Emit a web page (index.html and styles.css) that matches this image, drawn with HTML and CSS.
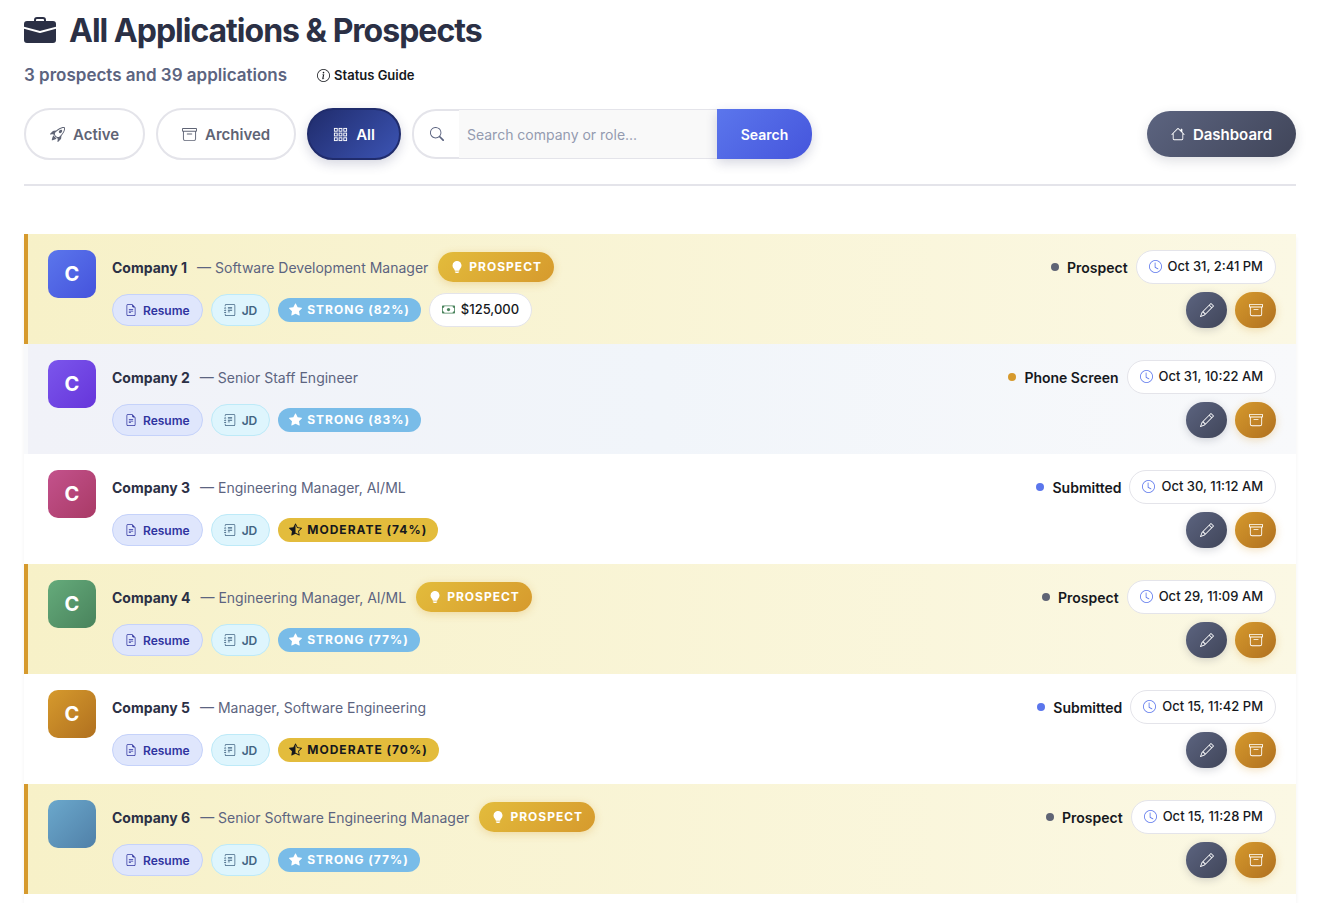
FILE: index.html
```html
<!DOCTYPE html>
<html lang="en">
<head>
  <meta charset="UTF-8">
  <meta name="viewport" content="width=device-width, initial-scale=1.0">
  <title>All Applications &amp; Prospects</title>
  <link rel="stylesheet" href="styles.css">
</head>
<body>
  <!-- Icon sprite -->
  <svg class="sprite" aria-hidden="true">
    <symbol id="briefcase" viewBox="0 0 16 16"><path d="M6.5 1A1.5 1.5 0 0 0 5 2.5V3H1.5A1.5 1.5 0 0 0 0 4.5v1.384l7.614 2.03a1.5 1.5 0 0 0 .772 0L16 5.884V4.5A1.5 1.5 0 0 0 14.5 3H11v-.5A1.5 1.5 0 0 0 9.5 1zm0 1h3a.5.5 0 0 1 .5.5V3H6v-.5a.5.5 0 0 1 .5-.5"/><path d="M0 12.5A1.5 1.5 0 0 0 1.5 14h13a1.5 1.5 0 0 0 1.5-1.5V6.85L8.129 8.947a.5.5 0 0 1-.258 0L0 6.85z"/></symbol>
    <symbol id="info" viewBox="0 0 16 16"><path d="M8 15A7 7 0 1 1 8 1a7 7 0 0 1 0 14m0 1A8 8 0 1 0 8 0a8 8 0 0 0 0 16"/><path d="m8.93 6.588-2.29.287-.082.38.45.083c.294.07.352.176.288.469l-.738 3.468c-.194.897.105 1.319.808 1.319.545 0 1.178-.252 1.465-.598l.088-.416c-.2.176-.492.246-.686.246-.275 0-.375-.193-.304-.533zM9 4.5a1 1 0 1 1-2 0 1 1 0 0 1 2 0"/></symbol>
    <symbol id="rocket" viewBox="0 0 16 16"><path d="M9.752 6.193c.599.6 1.73.437 2.528-.362s.96-1.932.362-2.531c-.599-.6-1.73-.438-2.528.361-.798.8-.96 1.933-.362 2.532"/><path d="M15.811 3.312c-.363 1.534-1.334 3.626-3.64 6.218l-.24 2.408a2.56 2.56 0 0 1-.732 1.526L8.817 15.85a.51.51 0 0 1-.867-.434l.27-1.899c.04-.28-.013-.593-.131-.956a9 9 0 0 0-.249-.657l-.082-.202c-.815-.197-1.578-.662-2.191-1.277-.614-.615-1.079-1.379-1.275-2.195l-.203-.083a10 10 0 0 0-.655-.248c-.363-.119-.675-.172-.955-.132l-1.896.27A.51.51 0 0 1 .15 7.17l2.382-2.386c.41-.41.947-.67 1.524-.734h.006l2.4-.238C9.005 1.55 11.087.582 12.623.208c.89-.217 1.59-.232 2.08-.188.244.023.435.06.57.093q.1.026.16.045c.184.06.279.13.351.295l.029.073a3.5 3.5 0 0 1 .157.721c.055.485.051 1.178-.159 2.065m-4.828 7.475.04-.04-.107 1.081a1.54 1.54 0 0 1-.44.913l-1.298 1.3.054-.38c.072-.506-.034-.993-.172-1.418a9 9 0 0 0-.164-.45c.738-.065 1.462-.38 2.087-1.006M5.205 5c-.625.626-.94 1.351-1.004 2.09a9 9 0 0 0-.45-.164c-.424-.138-.91-.244-1.416-.172l-.38.054 1.3-1.3c.245-.246.566-.401.91-.44l1.08-.107zm9.406-3.961c-.38-.034-.967-.027-1.746.163-1.558.38-3.917 1.496-6.937 4.521-.62.62-.799 1.34-.687 2.051.107.676.483 1.362 1.048 1.928.564.565 1.25.941 1.924 1.049.71.112 1.429-.067 2.048-.688 3.079-3.083 4.192-5.444 4.556-6.987.183-.771.18-1.345.138-1.713a3 3 0 0 0-.045-.283 3 3 0 0 0-.3-.041Z"/><path d="M7.009 12.139a7.6 7.6 0 0 1-1.804-1.352A7.6 7.6 0 0 1 3.794 8.86c-1.102.992-1.965 5.054-1.839 5.18.125.126 3.936-.896 5.054-1.902Z"/></symbol>
    <symbol id="archive" viewBox="0 0 16 16"><path d="M0 2a1 1 0 0 1 1-1h14a1 1 0 0 1 1 1v2a1 1 0 0 1-1 1v7.5a2.5 2.5 0 0 1-2.5 2.5h-9A2.5 2.5 0 0 1 1 12.5V5a1 1 0 0 1-1-1zm2 3v7.5A1.5 1.5 0 0 0 3.5 14h9a1.5 1.5 0 0 0 1.5-1.5V5zm13-3H1v2h14zM5 7.5a.5.5 0 0 1 .5-.5h5a.5.5 0 0 1 0 1h-5a.5.5 0 0 1-.5-.5"/></symbol>
    <symbol id="grid" viewBox="0 0 16 16"><g fill="none" stroke="currentColor"><rect x="1.5" y="1.5" width="3" height="3"/><rect x="6.5" y="1.5" width="3" height="3"/><rect x="11.5" y="1.5" width="3" height="3"/><rect x="1.5" y="6.5" width="3" height="3"/><rect x="6.5" y="6.5" width="3" height="3"/><rect x="11.5" y="6.5" width="3" height="3"/><rect x="1.5" y="11.5" width="3" height="3"/><rect x="6.5" y="11.5" width="3" height="3"/><rect x="11.5" y="11.5" width="3" height="3"/></g></symbol>
    <symbol id="search" viewBox="0 0 16 16"><path d="M11.742 10.344a6.5 6.5 0 1 0-1.397 1.398h-.001q.044.06.098.115l3.85 3.85a1 1 0 0 0 1.415-1.414l-3.85-3.85a1 1 0 0 0-.115-.1zM12 6.5a5.5 5.5 0 1 1-11 0 5.5 5.5 0 0 1 11 0"/></symbol>
    <symbol id="house" viewBox="0 0 16 16"><path d="M8.707 1.5a1 1 0 0 0-1.414 0L.646 8.146a.5.5 0 0 0 .708.708L2 8.207V13.5A1.5 1.5 0 0 0 3.5 15h9a1.5 1.5 0 0 0 1.5-1.5V8.207l.646.647a.5.5 0 0 0 .708-.708L13 5.793V2.5a.5.5 0 0 0-.5-.5h-1a.5.5 0 0 0-.5.5v1.293zM13 7.207V13.5a.5.5 0 0 1-.5.5h-9a.5.5 0 0 1-.5-.5V7.207l5-5z"/></symbol>
    <symbol id="file" viewBox="0 0 16 16"><path d="M5.5 7a.5.5 0 0 0 0 1h5a.5.5 0 0 0 0-1zM5 9.5a.5.5 0 0 1 .5-.5h5a.5.5 0 0 1 0 1h-5a.5.5 0 0 1-.5-.5m0 2a.5.5 0 0 1 .5-.5h2a.5.5 0 0 1 0 1h-2a.5.5 0 0 1-.5-.5"/><path d="M9.5 0H4a2 2 0 0 0-2 2v12a2 2 0 0 0 2 2h8a2 2 0 0 0 2-2V4.5zm0 1v2A1.5 1.5 0 0 0 11 4.5h2V14a1 1 0 0 1-1 1H4a1 1 0 0 1-1-1V2a1 1 0 0 1 1-1z"/></symbol>
    <symbol id="journal" viewBox="0 0 16 16"><path d="M5 10.5a.5.5 0 0 1 .5-.5h2a.5.5 0 0 1 0 1h-2a.5.5 0 0 1-.5-.5m0-2a.5.5 0 0 1 .5-.5h5a.5.5 0 0 1 0 1h-5a.5.5 0 0 1-.5-.5m0-2a.5.5 0 0 1 .5-.5h5a.5.5 0 0 1 0 1h-5a.5.5 0 0 1-.5-.5m0-2a.5.5 0 0 1 .5-.5h5a.5.5 0 0 1 0 1h-5a.5.5 0 0 1-.5-.5"/><path d="M3 0h10a2 2 0 0 1 2 2v12a2 2 0 0 1-2 2H3a2 2 0 0 1-2-2v-1h1v1a1 1 0 0 0 1 1h10a1 1 0 0 0 1-1V2a1 1 0 0 0-1-1H3a1 1 0 0 0-1 1v1H1V2a2 2 0 0 1 2-2"/><path d="M1 5v-.5a.5.5 0 0 1 1 0V5h.5a.5.5 0 0 1 0 1h-2a.5.5 0 0 1 0-1zm0 3v-.5a.5.5 0 0 1 1 0V8h.5a.5.5 0 0 1 0 1h-2a.5.5 0 0 1 0-1zm0 3v-.5a.5.5 0 0 1 1 0v.5h.5a.5.5 0 0 1 0 1h-2a.5.5 0 0 1 0-1z"/></symbol>
    <symbol id="star" viewBox="0 0 16 16"><path d="M3.612 15.443c-.386.198-.824-.149-.746-.592l.83-4.73L.173 6.765c-.329-.314-.158-.888.283-.95l4.898-.696L7.538.792c.197-.39.73-.39.927 0l2.184 4.327 4.898.696c.441.062.612.636.282.95l-3.522 3.356.83 4.73c.078.443-.36.79-.746.592L8 13.187l-4.389 2.256z"/></symbol>
    <symbol id="star-half" viewBox="0 0 16 16"><path d="M5.354 5.119 7.538.792A.52.52 0 0 1 8 .5c.183 0 .366.097.465.292l2.184 4.327 4.898.696A.54.54 0 0 1 16 6.32a.55.55 0 0 1-.17.445l-3.523 3.356.83 4.73c.078.443-.36.79-.746.592L8 13.187l-4.389 2.256a.5.5 0 0 1-.146.05c-.342.06-.668-.254-.6-.642l.83-4.73L.173 6.765a.55.55 0 0 1-.172-.403.6.6 0 0 1 .085-.302.51.51 0 0 1 .37-.245zM8 12.027a.5.5 0 0 1 .232.056l3.686 1.894-.694-3.957a.56.56 0 0 1 .162-.505l2.907-2.77-4.052-.576a.53.53 0 0 1-.393-.288L8.001 2.223 8 2.226z"/></symbol>
    <symbol id="bulb" viewBox="0 0 16 16"><path d="M2 6a6 6 0 1 1 10.174 4.31c-.203.196-.359.4-.453.619l-.762 1.769A.5.5 0 0 1 10.5 13h-5a.5.5 0 0 1-.46-.302l-.761-1.77a2 2 0 0 0-.453-.618A5.98 5.98 0 0 1 2 6m3 8.5a.5.5 0 0 1 .5-.5h5a.5.5 0 0 1 0 1l-.224.447a1 1 0 0 1-.894.553H6.618a1 1 0 0 1-.894-.553L5.5 15a.5.5 0 0 1-.5-.5"/></symbol>
    <symbol id="cash" viewBox="0 0 16 16"><path d="M8 10a2 2 0 1 0 0-4 2 2 0 0 0 0 4"/><path d="M0 4a1 1 0 0 1 1-1h14a1 1 0 0 1 1 1v8a1 1 0 0 1-1 1H1a1 1 0 0 1-1-1zm3 0a2 2 0 0 1-2 2v4a2 2 0 0 1 2 2h10a2 2 0 0 1 2-2V6a2 2 0 0 1-2-2z"/></symbol>
    <symbol id="clock" viewBox="0 0 16 16"><path d="M8 3.5a.5.5 0 0 0-1 0V9a.5.5 0 0 0 .252.434l3.5 2a.5.5 0 0 0 .496-.868L8 8.71z"/><path d="M8 16A8 8 0 1 0 8 0a8 8 0 0 0 0 16m7-8A7 7 0 1 1 1 8a7 7 0 0 1 14 0"/></symbol>
    <symbol id="pencil" viewBox="0 0 16 16"><path d="M12.146.146a.5.5 0 0 1 .708 0l3 3a.5.5 0 0 1 0 .708l-10 10a.5.5 0 0 1-.168.11l-5 2a.5.5 0 0 1-.65-.65l2-5a.5.5 0 0 1 .11-.168zM11.207 2.5 13.5 4.793 14.793 3.5 12.5 1.207zm1.586 3L10.5 3.207 4 9.707V10h.5a.5.5 0 0 1 .5.5v.5h.5a.5.5 0 0 1 .5.5v.5h.293zm-9.761 5.175-.106.106-1.528 3.821 3.821-1.528.106-.106A.5.5 0 0 1 5 12.5V12h-.5a.5.5 0 0 1-.5-.5V11h-.5a.5.5 0 0 1-.468-.325"/></symbol>
  </svg>

  <!-- Page header -->
  <header class="page-header">
    <h1><svg class="icon"><use href="#briefcase"/></svg>All Applications &amp; Prospects</h1>
    <div class="summary">
      <p>3 prospects and 39 applications</p>
      <button type="button" class="guide-btn"><svg class="icon"><use href="#info"/></svg>Status Guide</button>
    </div>
    <div class="toolbar">
      <a href="#" class="filter"><svg class="icon"><use href="#rocket"/></svg>Active</a>
      <a href="#" class="filter"><svg class="icon"><use href="#archive"/></svg>Archived</a>
      <a href="#" class="filter filter-on"><svg class="icon"><use href="#grid"/></svg>All</a>
      <form class="search">
        <label for="q" class="search-icon" aria-label="Search"><svg class="icon"><use href="#search"/></svg></label>
        <input type="text" id="q" name="q" placeholder="Search company or role...">
        <button type="submit">Search</button>
      </form>
      <a href="#" class="dashboard-btn"><svg class="icon"><use href="#house"/></svg>Dashboard</a>
    </div>
  </header>

  <!-- Application list -->
  <main class="list">
    <article class="item item-prospect">
      <div class="logo logo-blue">C</div>
      <div class="info">
        <div class="title-line">
          <h2>Company 1</h2>
          <span class="role">— Software Development Manager</span>
          <span class="prospect"><svg class="icon"><use href="#bulb"/></svg>PROSPECT</span>
        </div>
        <div class="tags">
          <a href="#" class="tag tag-resume"><svg class="icon"><use href="#file"/></svg>Resume</a>
          <a href="#" class="tag tag-jd"><svg class="icon"><use href="#journal"/></svg>JD</a>
          <span class="match match-strong"><svg class="icon"><use href="#star"/></svg>STRONG (82%)</span>
          <span class="pill pill-salary"><svg class="icon"><use href="#cash"/></svg>$125,000</span>
        </div>
      </div>
      <div class="side">
        <div class="status-line">
          <span class="status status-grey">Prospect</span>
          <span class="pill pill-date"><svg class="icon"><use href="#clock"/></svg>Oct 31, 2:41 PM</span>
        </div>
        <div class="actions">
          <button type="button" class="edit-btn" aria-label="Edit"><svg class="icon"><use href="#pencil"/></svg></button>
          <button type="button" class="archive-btn" aria-label="Archive"><svg class="icon"><use href="#archive"/></svg></button>
        </div>
      </div>
    </article>

    <article class="item item-hover">
      <div class="logo logo-violet">C</div>
      <div class="info">
        <div class="title-line">
          <h2>Company 2</h2>
          <span class="role">— Senior Staff Engineer</span>
        </div>
        <div class="tags">
          <a href="#" class="tag tag-resume"><svg class="icon"><use href="#file"/></svg>Resume</a>
          <a href="#" class="tag tag-jd"><svg class="icon"><use href="#journal"/></svg>JD</a>
          <span class="match match-strong"><svg class="icon"><use href="#star"/></svg>STRONG (83%)</span>
        </div>
      </div>
      <div class="side">
        <div class="status-line">
          <span class="status status-amber">Phone Screen</span>
          <span class="pill pill-date"><svg class="icon"><use href="#clock"/></svg>Oct 31, 10:22 AM</span>
        </div>
        <div class="actions">
          <button type="button" class="edit-btn" aria-label="Edit"><svg class="icon"><use href="#pencil"/></svg></button>
          <button type="button" class="archive-btn" aria-label="Archive"><svg class="icon"><use href="#archive"/></svg></button>
        </div>
      </div>
    </article>

    <article class="item">
      <div class="logo logo-rose">C</div>
      <div class="info">
        <div class="title-line">
          <h2>Company 3</h2>
          <span class="role">— Engineering Manager, AI/ML</span>
        </div>
        <div class="tags">
          <a href="#" class="tag tag-resume"><svg class="icon"><use href="#file"/></svg>Resume</a>
          <a href="#" class="tag tag-jd"><svg class="icon"><use href="#journal"/></svg>JD</a>
          <span class="match match-moderate"><svg class="icon"><use href="#star-half"/></svg>MODERATE (74%)</span>
        </div>
      </div>
      <div class="side">
        <div class="status-line">
          <span class="status status-blue">Submitted</span>
          <span class="pill pill-date"><svg class="icon"><use href="#clock"/></svg>Oct 30, 11:12 AM</span>
        </div>
        <div class="actions">
          <button type="button" class="edit-btn" aria-label="Edit"><svg class="icon"><use href="#pencil"/></svg></button>
          <button type="button" class="archive-btn" aria-label="Archive"><svg class="icon"><use href="#archive"/></svg></button>
        </div>
      </div>
    </article>

    <article class="item item-prospect">
      <div class="logo logo-green">C</div>
      <div class="info">
        <div class="title-line">
          <h2>Company 4</h2>
          <span class="role">— Engineering Manager, AI/ML</span>
          <span class="prospect"><svg class="icon"><use href="#bulb"/></svg>PROSPECT</span>
        </div>
        <div class="tags">
          <a href="#" class="tag tag-resume"><svg class="icon"><use href="#file"/></svg>Resume</a>
          <a href="#" class="tag tag-jd"><svg class="icon"><use href="#journal"/></svg>JD</a>
          <span class="match match-strong"><svg class="icon"><use href="#star"/></svg>STRONG (77%)</span>
        </div>
      </div>
      <div class="side">
        <div class="status-line">
          <span class="status status-grey">Prospect</span>
          <span class="pill pill-date"><svg class="icon"><use href="#clock"/></svg>Oct 29, 11:09 AM</span>
        </div>
        <div class="actions">
          <button type="button" class="edit-btn" aria-label="Edit"><svg class="icon"><use href="#pencil"/></svg></button>
          <button type="button" class="archive-btn" aria-label="Archive"><svg class="icon"><use href="#archive"/></svg></button>
        </div>
      </div>
    </article>

    <article class="item">
      <div class="logo logo-amber">C</div>
      <div class="info">
        <div class="title-line">
          <h2>Company 5</h2>
          <span class="role">— Manager, Software Engineering</span>
        </div>
        <div class="tags">
          <a href="#" class="tag tag-resume"><svg class="icon"><use href="#file"/></svg>Resume</a>
          <a href="#" class="tag tag-jd"><svg class="icon"><use href="#journal"/></svg>JD</a>
          <span class="match match-moderate"><svg class="icon"><use href="#star-half"/></svg>MODERATE (70%)</span>
        </div>
      </div>
      <div class="side">
        <div class="status-line">
          <span class="status status-blue">Submitted</span>
          <span class="pill pill-date"><svg class="icon"><use href="#clock"/></svg>Oct 15, 11:42 PM</span>
        </div>
        <div class="actions">
          <button type="button" class="edit-btn" aria-label="Edit"><svg class="icon"><use href="#pencil"/></svg></button>
          <button type="button" class="archive-btn" aria-label="Archive"><svg class="icon"><use href="#archive"/></svg></button>
        </div>
      </div>
    </article>

    <article class="item item-prospect">
      <div class="logo logo-sky"></div>
      <div class="info">
        <div class="title-line">
          <h2>Company 6</h2>
          <span class="role">— Senior Software Engineering Manager</span>
          <span class="prospect"><svg class="icon"><use href="#bulb"/></svg>PROSPECT</span>
        </div>
        <div class="tags">
          <a href="#" class="tag tag-resume"><svg class="icon"><use href="#file"/></svg>Resume</a>
          <a href="#" class="tag tag-jd"><svg class="icon"><use href="#journal"/></svg>JD</a>
          <span class="match match-strong"><svg class="icon"><use href="#star"/></svg>STRONG (77%)</span>
        </div>
      </div>
      <div class="side">
        <div class="status-line">
          <span class="status status-grey">Prospect</span>
          <span class="pill pill-date"><svg class="icon"><use href="#clock"/></svg>Oct 15, 11:28 PM</span>
        </div>
        <div class="actions">
          <button type="button" class="edit-btn" aria-label="Edit"><svg class="icon"><use href="#pencil"/></svg></button>
          <button type="button" class="archive-btn" aria-label="Archive"><svg class="icon"><use href="#archive"/></svg></button>
        </div>
      </div>
    </article>
  </main>
</body>
</html>
```
FILE: styles.css
```css
* {
  box-sizing: border-box;
}
body {
  margin: 0;
  padding: 8px 23px 0 24px;
  font-family: Inter, "Liberation Sans", sans-serif;
  font-size: 15px;
  color: #16181d;
  background-color: #fff;
}
h1, h2, p {
  margin: 0;
}
a {
  text-decoration: none;
}
button, input {
  font-family: inherit;
}
button {
  border: none;
  cursor: pointer;
}
.sprite {
  display: none;
}
.icon {
  width: 14px;
  height: 14px;
  fill: currentColor;
  flex-shrink: 0;
}

/* Header styles */
.page-header {
  border-bottom: 2px solid #e4e4ea;
  padding-bottom: 24px;
}
h1 {
  display: flex;
  align-items: center;
  gap: 13px;
  font-size: 32px;
  line-height: 46px;
  font-weight: 700;
  letter-spacing: -1px;
  color: #2b3045;
}
h1 .icon {
  width: 32px;
  height: 32px;
}
.summary {
  display: flex;
  align-items: center;
  gap: 30px;
  margin-top: 6px;
}
.summary p {
  font-size: 17px;
  line-height: 30px;
  font-weight: 600;
  color: #5c6480;
}
.guide-btn {
  display: flex;
  align-items: center;
  gap: 4px;
  padding: 0;
  background: none;
  font-size: 13px;
  font-weight: 600;
  color: #16181d;
}
.guide-btn .icon {
  width: 13px;
  height: 13px;
}
.toolbar {
  display: flex;
  align-items: center;
  gap: 11px;
  margin-top: 18px;
}
.filter {
  display: flex;
  align-items: center;
  gap: 8px;
  height: 52px;
  padding: 0 24px;
  border: 2px solid #e4e4ea;
  border-radius: 26px;
  font-weight: 600;
  color: #5f6475;
}
.filter .icon {
  width: 15px;
  height: 15px;
}
.filter-on {
  background-image: linear-gradient(135deg, #202c6c, #3c54b4);
  border-color: #202c6c;
  color: #fff;
  box-shadow: 0 4px 12px rgba(43, 48, 99, 0.2);
}
.search {
  display: flex;
  height: 50px;
  width: 400px;
}
.search-icon {
  display: flex;
  align-items: center;
  padding: 0 15px 0 16px;
  border: 2px solid #e4e4ea;
  border-right: none;
  border-radius: 24px 0 0 24px;
  color: #5c6480;
}
.search input {
  flex: 1;
  min-width: 0;
  padding: 0 8px;
  border: solid #e4e4ea;
  border-width: 1px 0;
  background-color: #f9f9f9;
  font-size: 14px;
}
.search input::placeholder {
  color: #949bb0;
}
.search button {
  width: 95px;
  border-radius: 0 24px 24px 0;
  background-image: linear-gradient(135deg, #5b76ec, #4555dc);
  color: #fff;
  font-size: 14px;
  font-weight: 600;
  box-shadow: 0 4px 12px rgba(43, 48, 99, 0.2);
}
.dashboard-btn {
  display: flex;
  align-items: center;
  gap: 8px;
  height: 46px;
  margin-left: auto;
  padding: 0 24px;
  border-radius: 23px;
  background-image: linear-gradient(135deg, #5c6480, #404559);
  color: #fff;
  font-weight: 600;
  box-shadow: 0 4px 12px rgba(43, 48, 69, 0.15);
}

/* List styles */
.list {
  margin-top: 48px;
  padding-bottom: 9px;
  box-shadow: 0 4px 4px rgba(43, 48, 69, 0.06);
}
.item {
  display: flex;
  gap: 16px;
  padding: 16px 20px;
  border-left: 4px solid transparent;
}
.item-prospect {
  border-left-color: #d69a2d;
  background-image: linear-gradient(90deg, #f7f1c8, #fbf8e4);
}
.item-hover {
  border-left-color: #f8f9fb;
  background-image: linear-gradient(90deg, #f1f2f8, #f1f5fa 50%, #f8f9fb);
}
.logo {
  display: flex;
  align-items: center;
  justify-content: center;
  width: 48px;
  height: 48px;
  border-radius: 10px;
  color: #fff;
  font-size: 20px;
  font-weight: 700;
}
.logo-blue {
  background-image: linear-gradient(135deg, #5b76ec, #4553dc);
}
.logo-violet {
  background-image: linear-gradient(135deg, #7b56ec, #6635da);
}
.logo-rose {
  background-image: linear-gradient(135deg, #c3528c, #a93a66);
}
.logo-green {
  background-image: linear-gradient(135deg, #65ab7b, #49835c);
}
.logo-amber {
  background-image: linear-gradient(135deg, #d69a2d, #b0701f);
}
.logo-sky {
  background-image: linear-gradient(135deg, #6ba8cc, #5080a8);
}
.info {
  flex: 1;
}
.title-line, .tags, .status-line, .actions {
  display: flex;
  align-items: center;
  gap: 8px;
}
.title-line, .status-line {
  height: 34px;
}
.title-line {
  gap: 10px;
}
.tags {
  height: 36px;
  margin-top: 8px;
}
.actions {
  margin-top: 8px;
}
h2 {
  font-size: 14px;
  font-weight: 700;
  color: #2b3045;
}
.role {
  font-size: 14px;
  color: #5c6480;
}
.prospect {
  display: flex;
  align-items: center;
  gap: 6px;
  height: 30px;
  padding: 0 12px 1px 13px;
  border-radius: 15px;
  background-image: linear-gradient(135deg, #e3bc3c, #d69a2d);
  color: #fff;
  font-size: 12px;
  font-weight: 700;
  letter-spacing: 1px;
  box-shadow: 0 2px 8px rgba(214, 154, 45, 0.3);
}
.prospect .icon {
  width: 12px;
  height: 12px;
}
.tag {
  display: flex;
  align-items: center;
  gap: 6px;
  height: 32px;
  padding: 0 12px;
  border: 1px solid;
  border-radius: 16px;
  font-size: 12px;
  font-weight: 600;
}
.tag .icon {
  width: 12px;
  height: 12px;
}
.tag-resume {
  background-color: #dfe6fc;
  border-color: #c5d2fa;
  color: #3034a0;
}
.tag-jd {
  background-color: #def5fd;
  border-color: #bdeaf8;
  color: #426482;
}
.match {
  display: flex;
  align-items: center;
  gap: 5px;
  height: 24px;
  padding: 0 11px 2px;
  border-radius: 12px;
  font-size: 12px;
  font-weight: 700;
  letter-spacing: 1px;
}
.match .icon {
  width: 13px;
  height: 13px;
}
.match-strong {
  background-color: #79bce8;
  color: #fff;
}
.match-moderate {
  background-color: #e3bc3c;
  color: #16181d;
}
.pill {
  display: flex;
  align-items: center;
  gap: 6px;
  height: 34px;
  padding: 0 12px 2px;
  border: 1px solid #e4e4ea;
  border-radius: 17px;
  background-color: #fff;
  font-size: 13px;
  font-weight: 500;
}
.pill .icon {
  width: 13px;
  height: 13px;
}
.pill-salary .icon {
  color: #49835c;
}
.pill-date .icon {
  color: #5b76ec;
}
.side {
  display: flex;
  flex-direction: column;
  align-items: flex-end;
}
.status {
  display: flex;
  align-items: center;
  gap: 8px;
  font-size: 14px;
  font-weight: 600;
}
.status::before {
  content: "";
  width: 8px;
  height: 8px;
  border-radius: 50%;
  background-color: currentColor;
}
.status-grey::before {
  background-color: #5f6475;
}
.status-amber::before {
  background-color: #d69a2d;
}
.status-blue::before {
  background-color: #5b76ec;
}
.actions button {
  display: flex;
  align-items: center;
  justify-content: center;
  width: 41px;
  height: 36px;
  padding: 0;
  border-radius: 18px;
  color: #fff;
  box-shadow: 0 2px 8px rgba(43, 48, 69, 0.2);
}
.actions .edit-btn {
  background-image: linear-gradient(135deg, #5c6480, #404559);
}
.actions .archive-btn {
  background-image: linear-gradient(135deg, #d69a2d, #b0701f);
  box-shadow: 0 2px 8px rgba(214, 154, 45, 0.3);
}
```
